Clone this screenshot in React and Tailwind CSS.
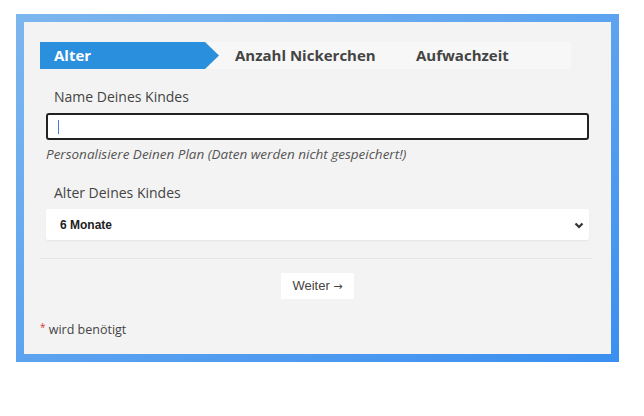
import React from 'react';

function Tabs() {
  return (
    <div className="flex h-[27px] w-[531px] items-stretch bg-[#f7f7f7]">
      <div
        className="flex w-[179px] items-center bg-[#2a8fdc] pl-[14px] text-[15px] font-bold text-white"
        style={{ clipPath: 'polygon(0 0, 165px 0, 179px 50%, 165px 100%, 0 100%)' }}
      >
        Alter
      </div>
      <div className="flex w-[181px] items-center pl-[16px] text-[15px] font-bold text-[#444]">
        Anzahl Nickerchen
      </div>
      <div className="flex items-center pl-[16px] text-[15px] font-bold text-[#444]">Aufwachzeit</div>
    </div>
  );
}

export default function App() {
  return (
    <div className="min-h-screen bg-white pl-[16px] pt-[14px] font-['Open_Sans',sans-serif]">
      <div className="w-[603px] bg-gradient-to-br from-[#7cb6ee] to-[#3a8ff0] p-[8px]">
        <div className="bg-[#f3f3f3] px-[16px] pb-[14px] pt-[20px]">
          <Tabs />

          {/* name */}
          <div className="mt-[18px] pl-[14px] text-[14px] leading-[20px] text-[#444]">Name Deines Kindes</div>
          <div className="mt-[6px] ml-[6px] flex h-[27px] w-[543px] items-center rounded-[3px] border-2 border-[#222] bg-white pl-[10px]">
            <span className="h-[14px] w-px bg-[#4a7bd0]" />
          </div>
          <p className="mt-[5px] ml-[6px] text-[13.5px] italic leading-[19px] text-[#555]">
            Personalisiere Deinen Plan (Daten werden nicht gespeichert!)
          </p>

          {/* age */}
          <div className="mt-[19px] pl-[14px] text-[14px] leading-[20px] text-[#444]">Alter Deines Kindes</div>
          <div className="mt-[6px] ml-[6px] flex h-[31px] w-[543px] items-center justify-between rounded-[2px] bg-white pl-[14px] pr-[5px] font-['Liberation_Sans',sans-serif] text-[12px] font-bold text-[#222] shadow-[0_1px_2px_rgba(0,0,0,0.06)]">
            <span>6 Monate</span>
            <svg className="h-[10px] w-[10px]" viewBox="0 0 10 10" fill="none" stroke="#333" strokeWidth="2.2">
              <path d="M1.5 3.5 5 7l3.5-3.5" />
            </svg>
          </div>

          <div className="mt-[18px] h-px w-[552px] bg-[#e6e6e6]" />

          <div className="mt-[14px] flex justify-center">
            <button className="h-[26px] w-[73px] bg-white font-['Liberation_Sans',sans-serif] text-[13px] text-[#444]">
              Weiter <span className="font-['DejaVu_Sans',sans-serif] text-[11px]">→</span>
            </button>
          </div>

          <div className="mt-[22px] text-[12.5px] text-[#444]">
            <span className="relative -top-[3px] text-[10px] text-[#d33]">*</span> wird benötigt
          </div>
        </div>
      </div>
    </div>
  );
}
